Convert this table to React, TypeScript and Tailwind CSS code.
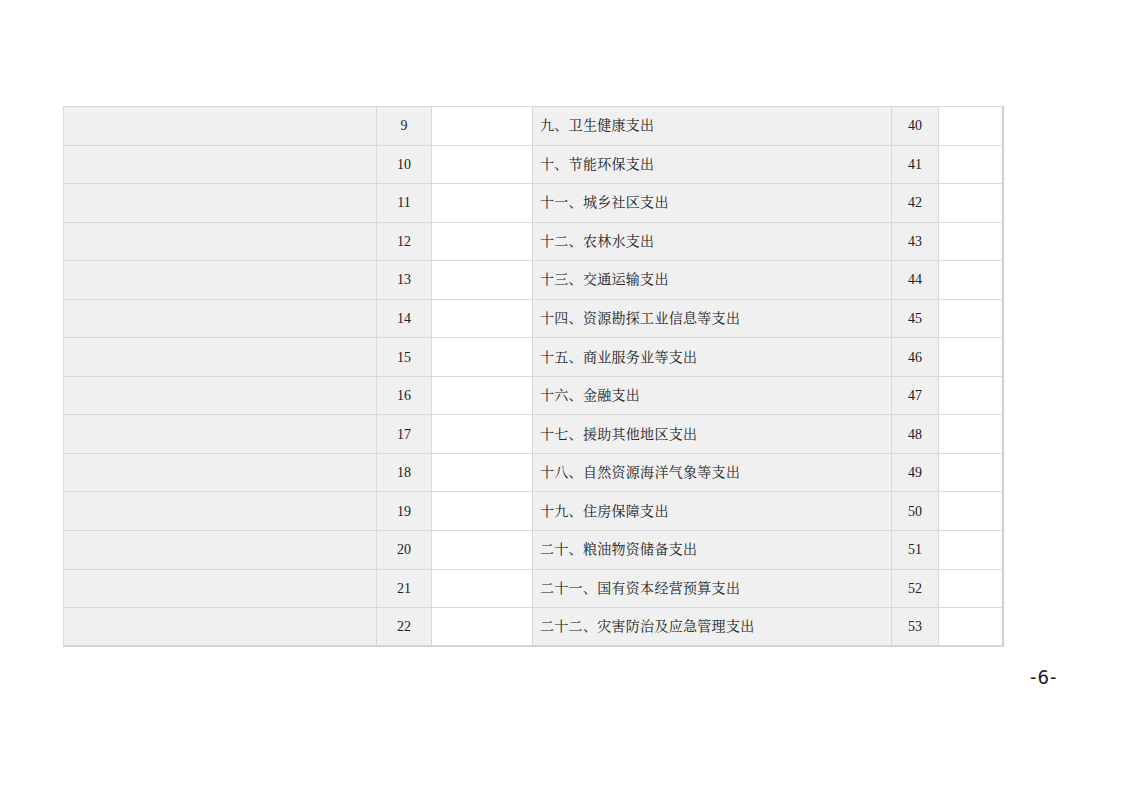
const rows: [number, string, number][] = [
  [9, "九、卫生健康支出", 40],
  [10, "十、节能环保支出", 41],
  [11, "十一、城乡社区支出", 42],
  [12, "十二、农林水支出", 43],
  [13, "十三、交通运输支出", 44],
  [14, "十四、资源勘探工业信息等支出", 45],
  [15, "十五、商业服务业等支出", 46],
  [16, "十六、金融支出", 47],
  [17, "十七、援助其他地区支出", 48],
  [18, "十八、自然资源海洋气象等支出", 49],
  [19, "十九、住房保障支出", 50],
  [20, "二十、粮油物资储备支出", 51],
  [21, "二十一、国有资本经营预算支出", 52],
  [22, "二十二、灾害防治及应急管理支出", 53],
];

const cell = "border border-[#d9d9d9]";

export default function App() {
  return (
    <div
      className="w-[1122px] h-[793px] bg-white text-[#222] relative"
      style={{ fontFamily: '"Liberation Serif", "Noto Serif CJK SC", "Noto Sans CJK SC", serif' }}
    >
      <div className="pt-[106px] pl-[63px]">
        <table className="border-collapse table-fixed w-[939px] border-r-2 border-b-2 border-r-[#cfcfcf] border-b-[#d4d4d4]">
          <colgroup>
            <col className="w-[313px]" />
            <col className="w-[55px]" />
            <col className="w-[101px]" />
            <col className="w-[359px]" />
            <col className="w-[47px]" />
            <col className="w-[64px]" />
          </colgroup>
          <tbody>
            {rows.map(([a, name, b]) => (
              <tr key={a} className="h-[38.55px]">
                <td className={`${cell} bg-[#f0f0f0]`}></td>
                <td className={`${cell} bg-[#f0f0f0] text-center text-[14px]`}>{a}</td>
                <td className={`${cell} bg-white`}></td>
                <td className={`${cell} bg-[#f0f0f0] text-[14px] pl-[7px] tracking-[0.3px]`}>{name}</td>
                <td className={`${cell} bg-[#f0f0f0] text-center text-[14px]`}>{b}</td>
                <td className={`${cell} bg-white`}></td>
              </tr>
            ))}
          </tbody>
        </table>
      </div>
      <div
        className="absolute left-[1030px] top-[662px] text-[20px] tracking-[1px] font-light"
        style={{ fontFamily: '"DejaVu Sans Condensed", "Liberation Sans Narrow", "Liberation Sans", sans-serif' }}
      >
        -6-
      </div>
    </div>
  );
}
